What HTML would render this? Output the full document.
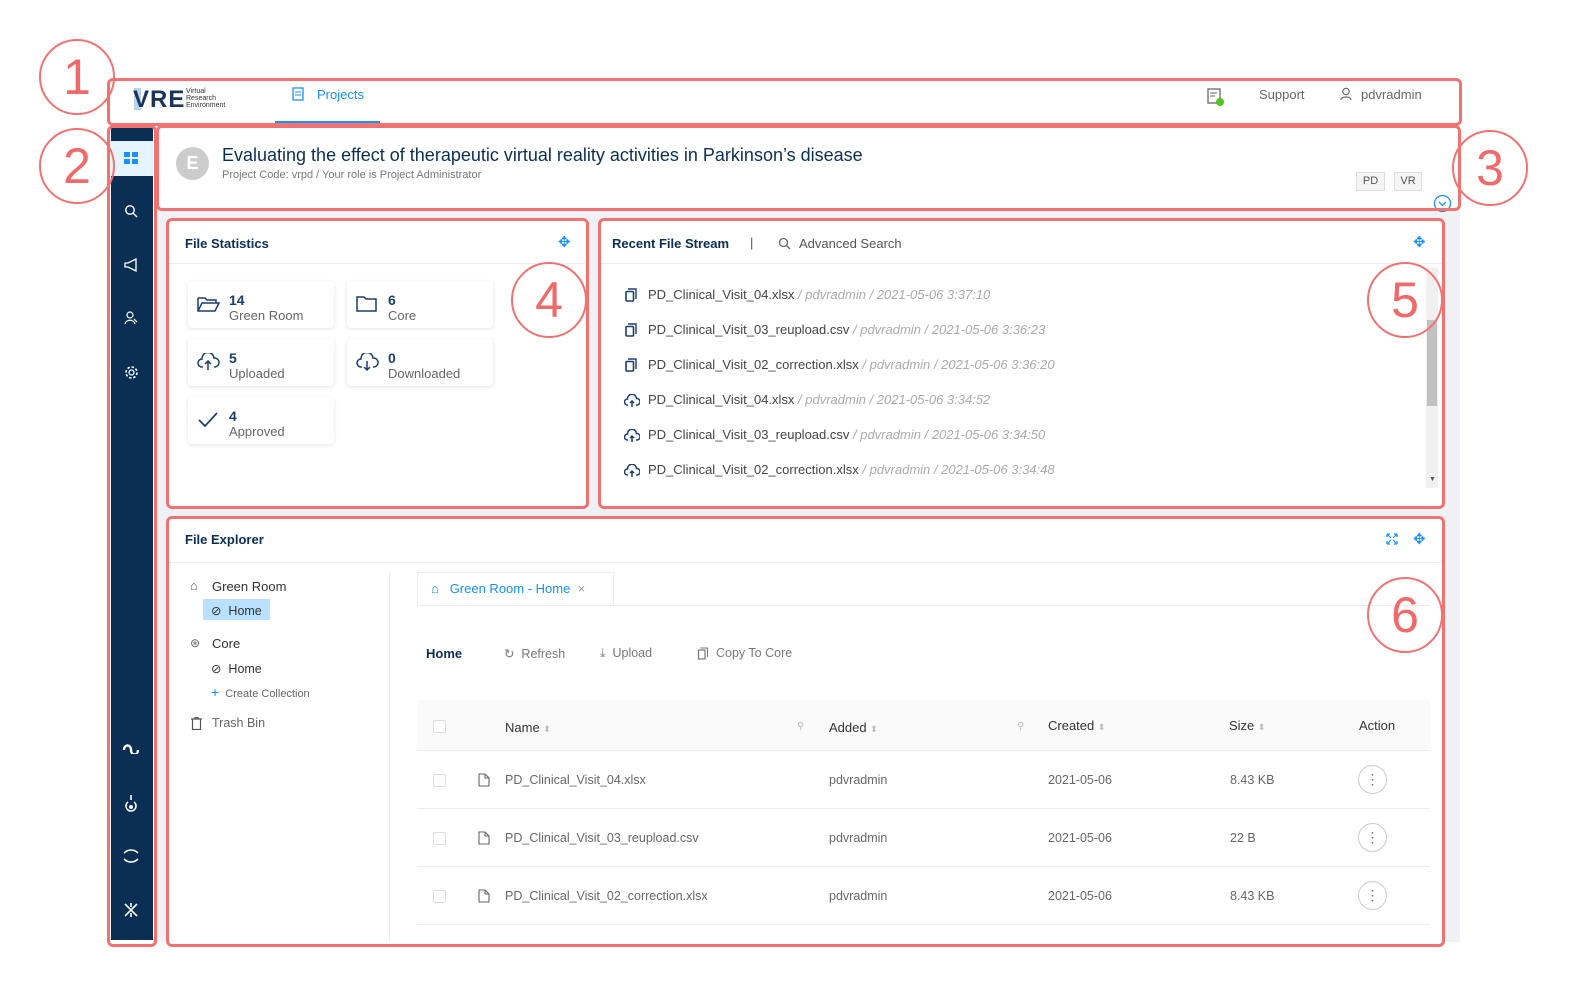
<!DOCTYPE html>
<html><head><meta charset="utf-8"><style>
*{box-sizing:border-box;margin:0;padding:0}
body{width:1576px;height:991px;background:#fff;position:relative;overflow:hidden;font-family:"Liberation Sans",sans-serif;color:#333}
.a{position:absolute}
.red{position:absolute;border:3px solid #f27272;border-radius:6px}
.circ{position:absolute;width:76px;height:76px;border:2.5px solid #f27272;border-radius:50%;color:#f06a6a;font-size:50px;text-align:center;line-height:72px;font-weight:300}
.panel{position:absolute;background:#fff}
.ttl{font-weight:bold;font-size:13px;color:#0b2e55}
.stat{position:absolute;width:146px;height:47px;background:#fff;border-radius:4px;box-shadow:0 1px 4px rgba(0,0,0,.12)}
.stat .n{position:absolute;left:41px;top:11px;font-weight:bold;font-size:14px;color:#1b3d6d}
.stat .l{position:absolute;left:41px;top:27px;font-size:13px;color:#666}
.stat svg{position:absolute;left:9px;top:14px}
.sr{position:absolute;left:648px;font-size:13px;color:#444}
.sr i{color:#aaa}
.si{position:absolute;left:624px}
.gray{color:#888;font-size:12.5px}
.row{position:absolute;left:417px;width:1013px;border-bottom:1px solid #eee;height:58px;font-size:12.5px;color:#666}
.row span{position:absolute;top:22px}
.row svg{position:absolute;left:61px;top:22px}
.cb{position:absolute;width:13px;height:13px;border:1px solid #ddd;border-radius:2px;background:#fff}
.dots{position:absolute;left:941px;top:14px;width:29px;height:29px;border:1px solid #ccc;border-radius:50%;text-align:center;line-height:26px;color:#666;font-size:14px}
</style></head><body>
<svg width="0" height="0" style="position:absolute"><defs>
<symbol id="cp" viewBox="0 0 14 14"><path d="M4 1h8v10" fill="none" stroke="#1b3d6d" stroke-width="1.4"/><rect x="2" y="3.5" width="7.5" height="9.5" rx="1" fill="none" stroke="#1b3d6d" stroke-width="1.6"/></symbol>
<symbol id="up" viewBox="0 0 16 14"><path d="M4 11H3.5a3 3 0 0 1 0-6 4.5 4.5 0 0 1 9-.5 3 3 0 0 1 .5 6.5H12M8 13V7M6 9l2-2 2 2" fill="none" stroke="#1b3d6d" stroke-width="1.5"/></symbol>
<symbol id="fi" viewBox="0 0 12 14"><path d="M1 1h6l4 4v8H1zM7 1v4h4" fill="none" stroke="#666" stroke-width="1.1"/></symbol>
</defs></svg>

<div class="a" style="left:157px;top:126px;width:1303px;height:816px;background:#eff1f5"></div>
<div class="a" style="left:110px;top:80px;width:1350px;height:44px;background:#fff"></div>
<div class="a" style="left:134px;top:88px;width:7px;height:22px;background:#b9d3ee"></div>
<div class="a" style="left:133px;top:86px;font-size:24px;font-weight:bold;color:#1b3558;letter-spacing:1px">VRE</div>
<div class="a" style="left:186px;top:88px;font-size:7px;line-height:7px;color:#333">Virtual<br>Research<br>Environment</div>
<svg class="a" style="left:292px;top:87px" width="12" height="14" viewBox="0 0 12 14"><rect x="1" y="1" width="10" height="12" fill="none" stroke="#1890ff" stroke-width="1.3"/><path d="M3 5h6M3 8h6" stroke="#1890ff"/></svg>
<div class="a" style="left:317px;top:87px;font-size:13px;color:#1890ff">Projects</div>
<div class="a" style="left:275px;top:121px;width:105px;height:2px;background:#1890ff"></div>
<svg class="a" style="left:1207px;top:88px" width="18" height="18"><rect x="1" y="1" width="12" height="14" fill="none" stroke="#666" stroke-width="1.3"/><path d="M3 5h7M3 8h5" stroke="#666"/><circle cx="13" cy="14" r="4" fill="#52c41a"/></svg>
<div class="a" style="left:1259px;top:87px;font-size:13px;color:#666">Support</div>
<svg class="a" style="left:1340px;top:87px" width="12" height="14"><circle cx="6" cy="4.5" r="3.2" fill="none" stroke="#666" stroke-width="1.2"/><path d="M1 13c0-4 10-4 10 0" fill="none" stroke="#666" stroke-width="1.2"/></svg>
<div class="a" style="left:1361px;top:87px;font-size:13px;color:#666">pdvradmin</div>

<div class="a" style="left:111px;top:127px;width:42px;height:813px;background:#0b2e55"></div>
<div class="a" style="left:111px;top:141px;width:42px;height:35px;background:#e6f4ff"></div>
<svg class="a" style="left:124px;top:152px" width="14" height="12"><rect x="0" y="0" width="6" height="5" fill="#1890ff"/><rect x="8" y="0" width="6" height="5" fill="#1890ff"/><rect x="0" y="7" width="6" height="5" fill="#1890ff"/><rect x="8" y="7" width="6" height="5" fill="#1890ff"/></svg>
<svg class="a" style="left:124px;top:204px" width="14" height="14"><circle cx="6" cy="6" r="4.2" fill="none" stroke="#fff" stroke-width="1.4"/><path d="M9 9l4 4" stroke="#fff" stroke-width="1.4"/></svg>
<svg class="a" style="left:124px;top:258px" width="14" height="14"><path d="M1 5h3l8-4v12l-8-4H1z" fill="none" stroke="#fff" stroke-width="1.3"/></svg>
<svg class="a" style="left:124px;top:311px" width="14" height="14"><circle cx="6" cy="4" r="3" fill="none" stroke="#fff" stroke-width="1.2"/><path d="M1 13c1-5 9-5 10 0M10 8l3 3" fill="none" stroke="#fff" stroke-width="1.2"/></svg>
<svg class="a" style="left:124px;top:365px" width="15" height="15"><circle cx="7.5" cy="7.5" r="2.5" fill="none" stroke="#fff" stroke-width="1.2"/><circle cx="7.5" cy="7.5" r="5.5" fill="none" stroke="#fff" stroke-width="1.6" stroke-dasharray="2.5 1.8"/></svg>
<svg class="a" style="left:122px;top:742px" width="18" height="12"><path d="M2 8c0-6 7-6 7 0s7 6 7 0" fill="none" stroke="#fff" stroke-width="2.4"/></svg>
<svg class="a" style="left:124px;top:794px" width="14" height="20"><path d="M7 1v5M4 8a5 5 0 1 0 6 0" fill="none" stroke="#fff" stroke-width="1.6"/><circle cx="7" cy="13" r="2" fill="#fff"/></svg>
<svg class="a" style="left:122px;top:849px" width="18" height="14"><path d="M2 4c4-4 10-4 14 0M2 10c4 4 10 4 14 0" fill="none" stroke="#fff" stroke-width="1.6"/></svg>
<svg class="a" style="left:123px;top:902px" width="16" height="16"><path d="M2 2l12 12M14 2L2 14M8 1v4M8 11v4" stroke="#fff" stroke-width="1.6"/></svg>

<div class="panel" style="left:159px;top:128px;width:1299px;height:80px"></div>
<div class="a" style="left:176px;top:147px;width:33px;height:33px;border-radius:50%;background:#ccc;color:#fff;font-size:18px;text-align:center;line-height:33px;font-weight:bold">E</div>
<div class="a" style="left:222px;top:145px;font-size:18px;color:#0b2e55">Evaluating the effect of therapeutic virtual reality activities in Parkinson’s disease</div>
<div class="a" style="left:222px;top:169px;font-size:11px;color:#777">Project Code: vrpd / Your role is Project Administrator</div>
<div class="a" style="left:1356px;top:172px;width:29px;height:19px;border:1px solid #ddd;background:#f5f5f5;font-size:11px;text-align:center;line-height:17px;color:#555">PD</div>
<div class="a" style="left:1394px;top:172px;width:28px;height:19px;border:1px solid #ddd;background:#f5f5f5;font-size:11px;text-align:center;line-height:17px;color:#555">VR</div>
<svg class="a" style="left:1433px;top:194px" width="19" height="19"><circle cx="9.5" cy="9.5" r="8" fill="#fff" stroke="#1890ff" stroke-width="1.3"/><path d="M6 8l3.5 3.5L13 8" fill="none" stroke="#1890ff" stroke-width="1.3"/></svg>

<div class="panel" style="left:169px;top:221px;width:417px;height:285px"></div>
<div class="a" style="left:169px;top:263px;width:417px;height:1px;background:#eee"></div>
<div class="a ttl" style="left:185px;top:236px">File Statistics</div>
<div class="a" style="left:558px;top:233px;color:#1890ff;font-size:15px">✥</div>
<div class="stat" style="left:188px;top:281px"><svg width="24" height="18"><path d="M1 3h7l2 2h9v3M1 3v13h17l4-8H5L1 16" fill="none" stroke="#1b3d6d" stroke-width="1.5"/></svg><div class="n">14</div><div class="l">Green Room</div></div>
<div class="stat" style="left:347px;top:281px"><svg width="22" height="18"><path d="M1 2h7l2 2h10v12H1z" fill="none" stroke="#1b3d6d" stroke-width="1.5"/></svg><div class="n">6</div><div class="l">Core</div></div>
<div class="stat" style="left:188px;top:339px"><svg width="24" height="18"><path d="M6 14H5a4 4 0 0 1 0-8 6 6 0 0 1 12-1 4.5 4.5 0 0 1 1 9h-1M11 17V8M8 11l3-3 3 3" fill="none" stroke="#1b3d6d" stroke-width="1.5"/></svg><div class="n">5</div><div class="l">Uploaded</div></div>
<div class="stat" style="left:347px;top:339px"><svg width="24" height="18"><path d="M6 14H5a4 4 0 0 1 0-8 6 6 0 0 1 12-1 4.5 4.5 0 0 1 1 9h-1M11 8v9M8 14l3 3 3-3" fill="none" stroke="#1b3d6d" stroke-width="1.5"/></svg><div class="n">0</div><div class="l">Downloaded</div></div>
<div class="stat" style="left:188px;top:397px"><svg width="24" height="18"><path d="M2 9l6 6L20 2" fill="none" stroke="#1b3d6d" stroke-width="1.7"/></svg><div class="n">4</div><div class="l">Approved</div></div>

<div class="panel" style="left:601px;top:221px;width:841px;height:285px"></div>
<div class="a" style="left:601px;top:263px;width:841px;height:1px;background:#eee"></div>
<div class="a ttl" style="left:612px;top:236px">Recent File Stream</div>
<div class="a" style="left:750px;top:235px;color:#555;font-size:13px">|</div>
<svg class="a" style="left:778px;top:237px" width="13" height="13"><circle cx="5.5" cy="5.5" r="4" fill="none" stroke="#666" stroke-width="1.3"/><path d="M8.5 8.5l3.5 3.5" stroke="#666" stroke-width="1.3"/></svg>
<div class="a" style="left:799px;top:236px;font-size:13px;color:#555">Advanced Search</div>
<div class="a" style="left:1413px;top:233px;color:#1890ff;font-size:15px">✥</div>
<div class="a" style="left:1426px;top:268px;width:12px;height:220px;background:#f0f0f0"></div>
<div class="a" style="left:1427px;top:320px;width:10px;height:86px;background:#c1c1c1"></div>
<div class="a" style="left:1429px;top:476px;font-size:7px;color:#555">▼</div>
<svg class="si" style="top:288px" width="14" height="14"><use href="#cp"/></svg>
<svg class="si" style="top:323px" width="14" height="14"><use href="#cp"/></svg>
<svg class="si" style="top:358px" width="14" height="14"><use href="#cp"/></svg>
<svg class="si" style="top:394px" width="16" height="14"><use href="#up"/></svg>
<svg class="si" style="top:429px" width="16" height="14"><use href="#up"/></svg>
<svg class="si" style="top:464px" width="16" height="14"><use href="#up"/></svg>
<div class="sr" style="top:287px">PD_Clinical_Visit_04.xlsx <i>/ pdvradmin / 2021-05-06 3:37:10</i></div>
<div class="sr" style="top:322px">PD_Clinical_Visit_03_reupload.csv <i>/ pdvradmin / 2021-05-06 3:36:23</i></div>
<div class="sr" style="top:357px">PD_Clinical_Visit_02_correction.xlsx <i>/ pdvradmin / 2021-05-06 3:36:20</i></div>
<div class="sr" style="top:392px">PD_Clinical_Visit_04.xlsx <i>/ pdvradmin / 2021-05-06 3:34:52</i></div>
<div class="sr" style="top:427px">PD_Clinical_Visit_03_reupload.csv <i>/ pdvradmin / 2021-05-06 3:34:50</i></div>
<div class="sr" style="top:462px">PD_Clinical_Visit_02_correction.xlsx <i>/ pdvradmin / 2021-05-06 3:34:48</i></div>

<div class="panel" style="left:169px;top:519px;width:1273px;height:425px"></div>
<div class="a" style="left:169px;top:562px;width:1273px;height:1px;background:#eee"></div>
<div class="a ttl" style="left:185px;top:532px">File Explorer</div>
<svg class="a" style="left:1386px;top:533px" width="12" height="12"><path d="M1 1l4 4M11 1L7 5M1 11l4-4M11 11L7 7M1 1h3M1 1v3M11 1H8M11 1v3M1 11h3M1 11V8M11 11H8M11 11V8" stroke="#1890ff" stroke-width="1.2" fill="none"/></svg>
<div class="a" style="left:1413px;top:530px;color:#1890ff;font-size:15px">✥</div>
<div class="a" style="left:389px;top:572px;width:1px;height:370px;background:#eee"></div>
<div class="a" style="left:190px;top:578px;font-size:13px;color:#666">⌂</div>
<div class="a" style="left:212px;top:579px;font-size:13px;color:#333">Green Room</div>
<div class="a" style="left:203px;top:599px;width:67px;height:21px;background:#bae0ff"></div>
<div class="a" style="left:211px;top:603px;font-size:12.5px;color:#333">⊘&nbsp; Home</div>
<div class="a" style="left:190px;top:636px;font-size:12px;color:#666">⊛</div>
<div class="a" style="left:212px;top:636px;font-size:13px;color:#333">Core</div>
<div class="a" style="left:211px;top:661px;font-size:12.5px;color:#333">⊘&nbsp; Home</div>
<div class="a" style="left:211px;top:684px;font-size:11px;color:#666"><span style="color:#1890ff;font-size:14px">+</span>&nbsp; Create Collection</div>
<svg class="a" style="left:191px;top:717px" width="11" height="13"><path d="M0 2h11M4 2V0.5h3V2M1.5 2v10.5h8V2" fill="none" stroke="#555" stroke-width="1.2"/></svg>
<div class="a" style="left:212px;top:716px;font-size:12.5px;color:#666">Trash Bin</div>

<div class="a" style="left:417px;top:572px;width:197px;height:34px;border:1px solid #eee;border-bottom:none;background:#fff"></div>
<div class="a" style="left:417px;top:605px;width:1013px;height:1px;background:#eee"></div>
<div class="a" style="left:431px;top:581px;font-size:13px;color:#1890ff">⌂&nbsp;&nbsp; Green Room - Home <span style="color:#999">&nbsp;×</span></div>

<div class="a" style="left:426px;top:646px;font-size:13px;font-weight:bold;color:#0b2e55">Home</div>
<div class="a" style="left:504px;top:646px;font-size:12.5px;color:#777">↻&nbsp; Refresh</div>
<div class="a" style="left:600px;top:646px;font-size:12.5px;color:#777">⤓&nbsp; Upload</div>
<svg class="a" style="left:697px;top:647px" width="12" height="13"><path d="M3.5 1h7v9" fill="none" stroke="#777" stroke-width="1.1"/><rect x="1.5" y="3" width="6.5" height="9" fill="none" stroke="#777" stroke-width="1.2"/></svg>
<div class="a" style="left:716px;top:646px;font-size:12.5px;color:#777">Copy To Core</div>

<div class="a" style="left:417px;top:700px;width:1013px;height:51px;background:#fafafa;border-bottom:1px solid #eee"></div>
<div class="cb" style="left:433px;top:720px"></div>
<div class="a" style="left:505px;top:720px;font-size:13px;color:#333">Name <span style="color:#bbb;font-size:9px">⬍</span></div>
<div class="a" style="left:797px;top:721px;font-size:10px;color:#bbb">⚲</div>
<div class="a" style="left:829px;top:720px;font-size:13px;color:#333">Added <span style="color:#bbb;font-size:9px">⬍</span></div>
<div class="a" style="left:1017px;top:721px;font-size:10px;color:#bbb">⚲</div>
<div class="a" style="left:1048px;top:718px;font-size:13px;color:#333">Created <span style="color:#bbb;font-size:9px">⬍</span></div>
<div class="a" style="left:1229px;top:718px;font-size:13px;color:#333">Size <span style="color:#bbb;font-size:9px">⬍</span></div>
<div class="a" style="left:1359px;top:718px;font-size:13px;color:#333">Action</div>

<div class="row" style="top:751px"><div class="cb" style="left:16px;top:23px"></div><svg width="12" height="14"><use href="#fi"/></svg><span style="left:88px">PD_Clinical_Visit_04.xlsx</span><span style="left:412px">pdvradmin</span><span style="left:631px">2021-05-06</span><span style="left:813px">8.43 KB</span><div class="dots">⋮</div></div>
<div class="row" style="top:809px"><div class="cb" style="left:16px;top:23px"></div><svg width="12" height="14"><use href="#fi"/></svg><span style="left:88px">PD_Clinical_Visit_03_reupload.csv</span><span style="left:412px">pdvradmin</span><span style="left:631px">2021-05-06</span><span style="left:813px">22 B</span><div class="dots">⋮</div></div>
<div class="row" style="top:867px"><div class="cb" style="left:16px;top:23px"></div><svg width="12" height="14"><use href="#fi"/></svg><span style="left:88px">PD_Clinical_Visit_02_correction.xlsx</span><span style="left:412px">pdvradmin</span><span style="left:631px">2021-05-06</span><span style="left:813px">8.43 KB</span><div class="dots">⋮</div></div>

<div class="red" style="left:107px;top:78px;width:1355px;height:48px"></div>
<div class="red" style="left:107px;top:125px;width:50px;height:822px"></div>
<div class="red" style="left:156px;top:125px;width:1305px;height:86px"></div>
<div class="red" style="left:166px;top:218px;width:423px;height:291px"></div>
<div class="red" style="left:598px;top:218px;width:847px;height:291px"></div>
<div class="red" style="left:166px;top:516px;width:1279px;height:431px"></div>

<div class="circ" style="left:39px;top:39px">1</div>
<div class="circ" style="left:39px;top:128px">2</div>
<div class="circ" style="left:1452px;top:130px">3</div>
<div class="circ" style="left:511px;top:262px">4</div>
<div class="circ" style="left:1367px;top:262px">5</div>
<div class="circ" style="left:1367px;top:577px">6</div>
</body></html>
